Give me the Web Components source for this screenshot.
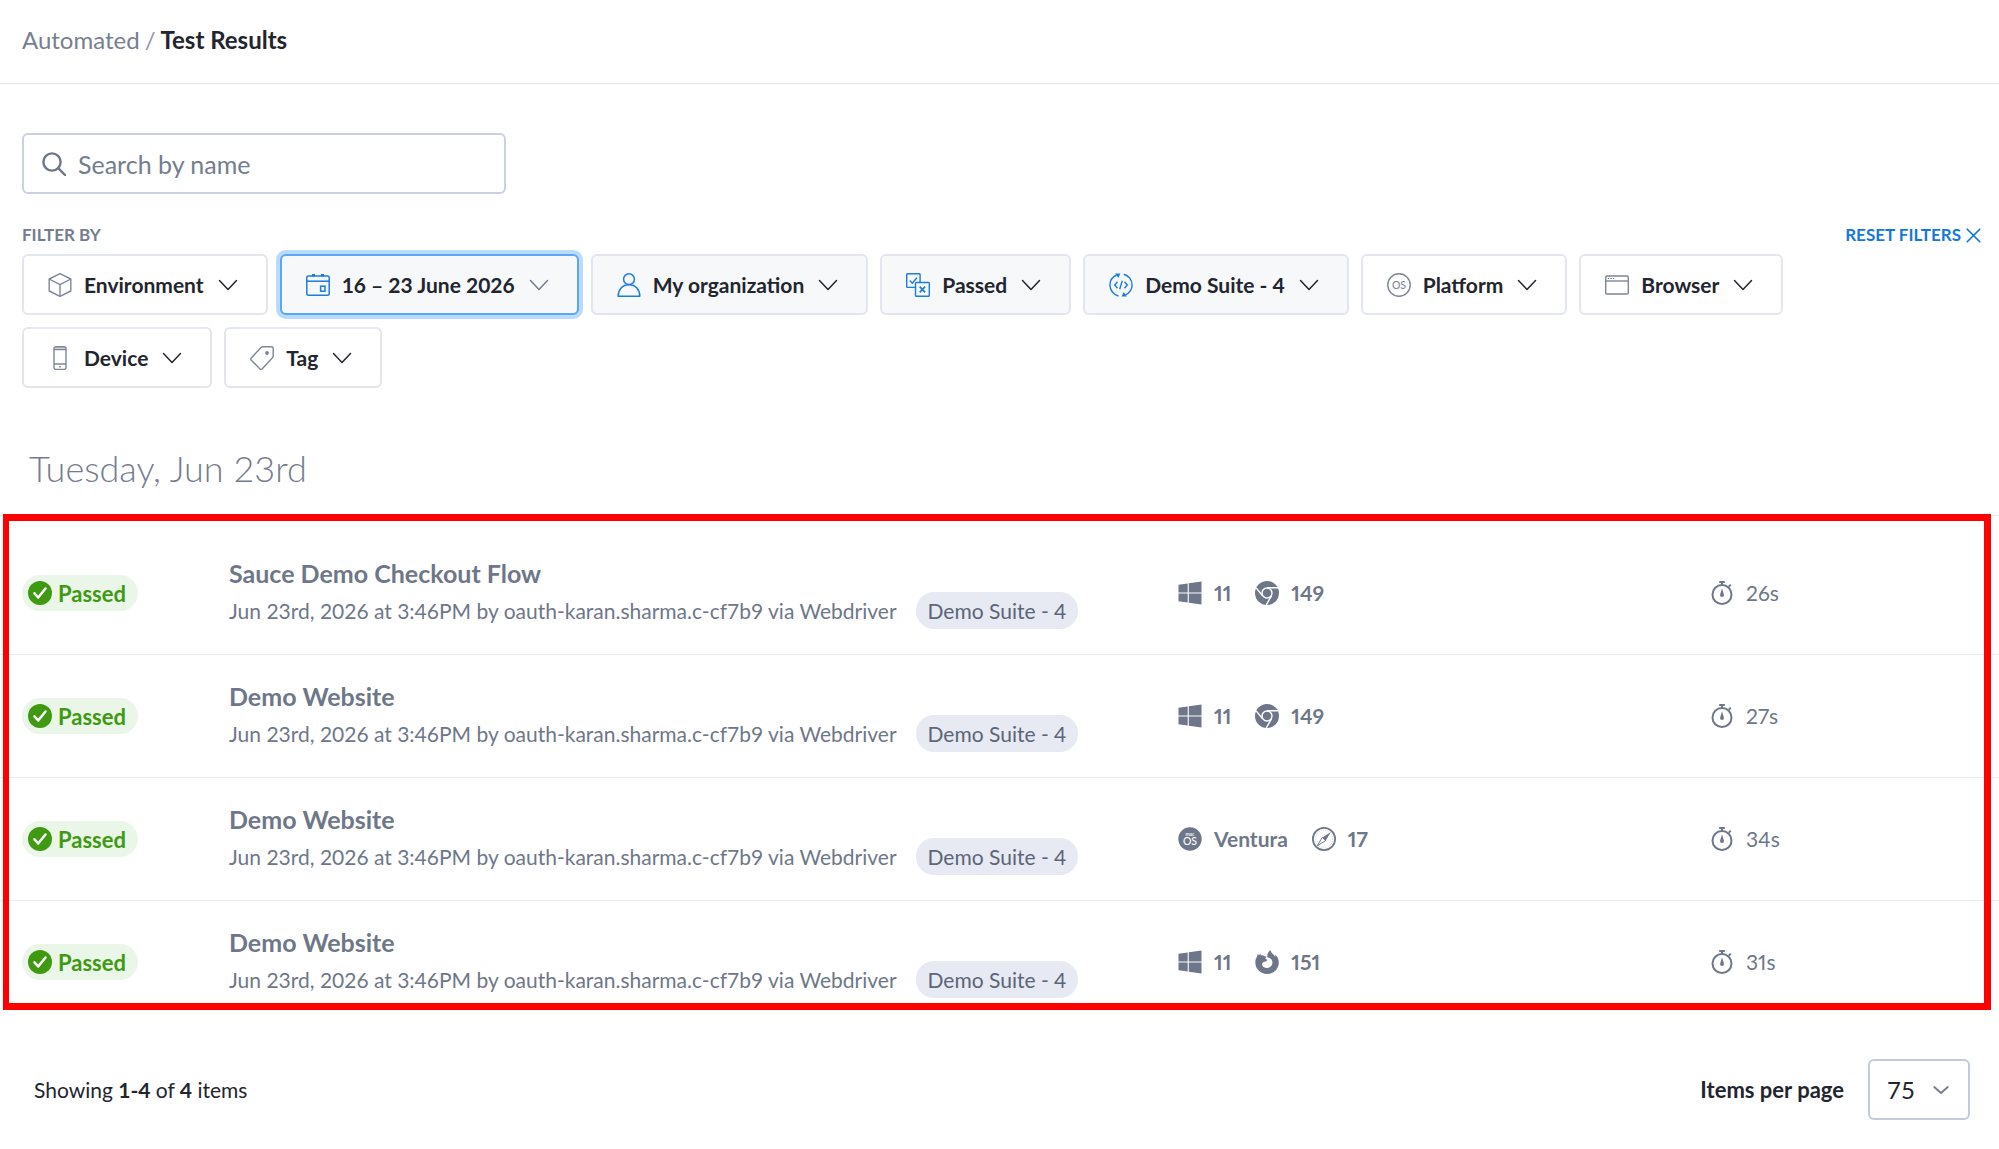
<!DOCTYPE html>
<html lang="en">
<head>
<meta charset="utf-8">
<title>Test Results</title>
<style>
    body {
        margin: 0;
        background: #fff;
        color: #22252e;
        font-family: Lato, "Open Sans", sans-serif;
        font-size: 21px;
    }
</style>
</head>
<body>

<results-page>
    <page-header slot="header" parent="Automated" current="Test Results"></page-header>
    <search-box slot="search" placeholder="Search by name"></search-box>
    <filter-bar slot="filters">
        <filter-button icon="cube">Environment</filter-button>
        <filter-button icon="calendar" selected focused>16 – 23 June 2026</filter-button>
        <filter-button icon="person" selected>My organization</filter-button>
        <filter-button icon="status" selected>Passed</filter-button>
        <filter-button icon="build" selected>Demo Suite - 4</filter-button>
        <filter-button icon="os">Platform</filter-button>
        <filter-button icon="window">Browser</filter-button>
        <filter-button icon="phone">Device</filter-button>
        <filter-button icon="tag">Tag</filter-button>
    </filter-bar>
    <results-table heading="Tuesday, Jun 23rd"></results-table>
    <page-footer slot="footer" range="1-4" total="4"></page-footer>
</results-page>

<script>
const icons = {
    search: '<g fill="none" stroke="currentColor" stroke-width="2.4" stroke-linecap="round"><circle cx="10" cy="10" r="8.6"/><path d="M16.2 16.2 23 23"/></g>',
    cube: '<g fill="none" stroke="currentColor" stroke-width="1.4" stroke-linejoin="round"><path d="M12 .7 22.8 6v12L12 23.4 1.2 18V6z"/><path d="M1.2 6 12 11.6 22.8 6M12 11.6v11.8"/></g>',
    calendar: '<g fill="none" stroke="currentColor" stroke-width="1.5"><rect x=".8" y="3" width="22.4" height="19.2" rx="1.5"/><path d="M.8 8.2h22.4"/><rect x="14.6" y="13.2" width="4.4" height="5"/><path d="M7.5 1v2.5M16.5 1v2.5" stroke-width="3"/></g>',
    person: '<g fill="none" stroke="currentColor" stroke-width="1.5" stroke-linejoin="round"><circle cx="12" cy="6.2" r="5.4"/><path d="M1.2 23.2c0-6.6 4.2-11.4 10.8-11.4s10.8 4.8 10.8 11.4z"/></g>',
    status: '<g fill="none" stroke="currentColor" stroke-width="1.4" stroke-linejoin="round"><path d="M9.4 14.4H1.5a.8.8 0 0 1-.8-.8V1.5a.8.8 0 0 1 .8-.8h11.8a.8.8 0 0 1 .8.8v8"/><rect x="9.5" y="9.5" width="13.8" height="13.8" rx=".8"/><path d="m3.8 7.6 2.5 2.7 4.5-5.5"/><path d="m13.7 13.7 5.4 5.6m0-5.6-5.4 5.6" stroke-width="1.7"/></g>',
    build: '<g fill="none" stroke="currentColor" stroke-width="1.4"><path d="M9.5 23C4.5 21.6.9 17.3.9 12c0-4.5 2.5-8 6.7-10"/><path d="M14.8 1.2C19.6 2.5 23.1 6.8 23.1 12c0 4.4-2.5 7.9-6.6 9.8"/><path d="m8.5 8.8-2.8 3.2 2.8 3.2M15.5 8.8l2.8 3.2-2.8 3.2M13.3 7.8l-2.6 8.4"/></g><path d="M6.2.6h5.2L9.3 5zM17.8 23.4h-5.2L14.7 19z" fill="currentColor"/>',
    os: '<circle cx="12" cy="12" r="11.2" fill="none" stroke="currentColor" stroke-width="1.4"/><text x="12" y="15.8" text-anchor="middle" font-size="10.5" font-weight="500" fill="currentColor">OS</text>',
    window: '<g fill="none" stroke="currentColor" stroke-width="1.4"><rect x=".7" y="3" width="22.6" height="18" rx="1.2"/><path d="M.7 8h22.6"/></g><path d="M2.8 5.5h1.5M5.3 5.5h1.5M7.8 5.5h1.5" stroke="currentColor" stroke-width="1.2"/>',
    phone: '<g fill="none" stroke="currentColor" stroke-width="1.4"><rect x="6" y=".7" width="12" height="22.8" rx="2"/><path d="M6 3.6h12M6 18h12"/></g><path d="M6.500 1h11v2.500h-11z" fill="currentColor" opacity=".4"/><circle cx="12" cy="20.7" r=".9" fill="currentColor"/>',
    tag: '<path d="M12.9.8h8.6c1 0 1.7.7 1.7 1.7v7.3c0 .8-.2 1.4-.7 2L11.6 23.4h-1.2L.9 13.7v-1.3L11 1.5c.5-.5 1.1-.7 1.9-.7z" fill="none" stroke="currentColor" stroke-width="1.4" stroke-linejoin="round"/><circle cx="17" cy="7" r="1.9" fill="currentColor"/>',
    chevron: '<path d="m3.5 7.500 8.500 9 8.500-9" fill="none" stroke="currentColor" stroke-width="1.5" stroke-linecap="round" stroke-linejoin="round"/>',
    caret: '<path d="m3 8 9 8 9-8" fill="none" stroke="currentColor" stroke-width="2.5" stroke-linecap="round" stroke-linejoin="round"/>',
    close: '<path d="m2 2 20 20M22 2 2 22" fill="none" stroke="currentColor" stroke-width="2.8" stroke-linecap="round"/>',
    check: '<circle cx="12" cy="12" r="12" fill="currentColor"/><path d="m6.5 12.3 3.7 4.2 7.3-9" fill="none" stroke="#fff" stroke-width="2.5" stroke-linecap="round" stroke-linejoin="round"/>',
    windows: '<path d="M.5 3.7 9.7 2.4v9H.5zM10.8 2.2 23.5.5v10.9H10.8zM.5 12.6h9.2v9L.5 20.3zM10.8 12.6h12.7v11L10.8 21.8z" fill="currentColor"/>',
    chrome: '<circle cx="12" cy="12" r="12" fill="currentColor"/><g fill="none" stroke="#fff" stroke-width="1.4"><circle cx="12" cy="12" r="5"/><path d="M12 6.8h11.3M7.6 14.7 1.1 6.9M16.6 14.6 11.2 24"/></g>',
    macos: '<circle cx="12" cy="12" r="11.7" fill="currentColor"/><g fill="#fff" text-anchor="middle"><text x="12" y="8.8" font-size="5" font-weight="600">mac</text><text x="12" y="18" font-size="10.5" font-weight="500">OS</text></g>',
    safari: '<circle cx="12" cy="12" r="11.1" fill="none" stroke="currentColor" stroke-width="1.8"/><circle cx="12" cy="12" r="8.6" fill="none" stroke="currentColor" stroke-width=".8" stroke-dasharray=".6 1.6" opacity=".6"/><path d="m19 5-5.4 8.7-3.3-3.3z" fill="currentColor"/><path d="m5.2 18.8 5.1-8.4 3.3 3.3z" fill="none" stroke="currentColor" stroke-width="1"/>',
    firefox: '<path d="M15.6 0c.3 2 1 3 2.6 4.3 1 .9 1.5 1.7 1.9 2.6.3-.8.3-1.5.2-2.3 2.3 2.2 3.5 5 3.5 7.9 0 6.4-5.2 11.5-11.7 11.5C5.500 24 .3 19 .3 12.6c0-2.500.6-4.400 1.700-6.200L2.600 4l1.300 1.300L5.500 3.600l.3 1.800c1.500-.3 2.900 0 4 .8.8 0 1.500.2 2 .6-1.200 1-1.500 1.300-1.100 2.300l1.700.6c-.4 1.300-1.400 1.700-2.800 2-1.700.4-2.700 1.300-2.600 2.700.3 2 2.500 3.500 5 3.500 3.200 0 5.400-2.400 5.400-5.200 0-2-.9-3.600-2.500-4.700l-2.600-.7c-.3-3 .7-5.600 3.300-7.300z" fill="currentColor"/>',
    timer: '<g fill="none" stroke="currentColor" stroke-width="2"><circle cx="12" cy="13.5" r="9.5"/><path d="M9.2 1h5.6M12 1v3M18.8 5.600l2-2"/></g><path d="M12 7.2 14 14a2 2 0 1 1-4 0z" fill="currentColor"/>'
};

const tests = [
    { name: 'Sauce Demo Checkout Flow', os: 'windows', osVersion: '11', browser: 'chrome', browserVersion: '149', time: '26s' },
    { name: 'Demo Website', os: 'windows', osVersion: '11', browser: 'chrome', browserVersion: '149', time: '27s' },
    { name: 'Demo Website', os: 'macos', osVersion: 'Ventura', browser: 'safari', browserVersion: '17', time: '34s' },
    { name: 'Demo Website', os: 'windows', osVersion: '11', browser: 'firefox', browserVersion: '151', time: '31s' }
];

class UiIcon extends HTMLElement {

    constructor() {
        super();
        this.shadow = this.attachShadow({ mode: 'open' });
    }

    connectedCallback() {
        this.shadow.innerHTML =
        `
        <style>
        :host {
            display: inline-flex;
            flex: none;
            width: 24px;
            height: 24px;
        }
        svg {
            width: 100%;
            height: 100%;
        }
        </style>
        <svg viewBox="0 0 24 24" aria-hidden="true">${icons[this.getAttribute('name')]}</svg>
        `;
    }
}

class ResultsPage extends HTMLElement {

    constructor() {
        super();
        this.shadow = this.attachShadow({ mode: 'open' });
    }

    connectedCallback() {
        this.shadow.innerHTML =
        `
        <style>
        :host {
            display: block;
        }
        .controls {
            padding: 49px 22px 0;
        }
        .filters {
            margin-top: 30px;
        }
        </style>
        <slot name="header"></slot>
        <main>
            <div class="controls">
                <slot name="search"></slot>
                <div class="filters"><slot name="filters"></slot></div>
            </div>
            <slot></slot>
        </main>
        <slot name="footer"></slot>
        `;
    }
}

class PageHeader extends HTMLElement {

    constructor() {
        super();
        this.shadow = this.attachShadow({ mode: 'open' });
    }

    connectedCallback() {
        this.shadow.innerHTML =
        `
        <style>
        :host {
            display: block;
            border-bottom: 1px solid #e3e6ee;
        }
        nav {
            display: flex;
            gap: 5px;
            padding: 25px 22px 28px;
            font-size: 24px;
            line-height: 30px;
            color: #9298a5;
        }
        a {
            color: #777f90;
            text-decoration: none;
        }
        h1 {
            margin: 0;
            font-size: 24px;
            font-weight: 700;
            color: #22252e;
        }
        </style>
        <nav aria-label="Breadcrumb">
            <a href="#automated">${this.getAttribute('parent')}</a>
            <span>/</span>
            <h1>${this.getAttribute('current')}</h1>
        </nav>
        `;
    }
}

class SearchBox extends HTMLElement {

    constructor() {
        super();
        this.shadow = this.attachShadow({ mode: 'open' });
    }

    connectedCallback() {
        const placeholder = this.getAttribute('placeholder');

        this.shadow.innerHTML =
        `
        <style>
        :host {
            display: block;
            max-width: 484px;
        }
        label {
            display: flex;
            align-items: center;
            gap: 12px;
            box-sizing: border-box;
            height: 61px;
            padding: 0 18px;
            border: 2px solid #cbd0df;
            border-radius: 6px;
            color: #6e7789;
        }
        input {
            flex: 1;
            min-width: 0;
            padding: 0;
            border: 0;
            outline: 0;
            font: inherit;
            font-size: 25px;
            color: #22252e;
        }
        input::placeholder {
            color: #747c8e;
            opacity: 1;
        }
        </style>
        <label>
            <ui-icon name="search"></ui-icon>
            <input type="text" placeholder="${placeholder}" aria-label="${placeholder}">
        </label>
        `;
    }
}

class FilterBar extends HTMLElement {

    constructor() {
        super();
        this.shadow = this.attachShadow({ mode: 'open' });
    }

    connectedCallback() {
        this.shadow.innerHTML =
        `
        <style>
        :host {
            display: block;
        }
        .top {
            display: flex;
            justify-content: space-between;
            font-size: 17px;
            font-weight: 700;
            line-height: 22px;
            color: #747c8e;
        }
        .reset {
            display: flex;
            align-items: center;
            gap: 5px;
            margin-right: -4px;
            padding: 0;
            border: 0;
            background: none;
            font: inherit;
            color: #1677e0;
        }
        .reset ui-icon {
            width: 15px;
            height: 15px;
        }
        .list {
            display: flex;
            flex-wrap: wrap;
            gap: 12px;
            max-width: 1800px;
            margin-top: 8px;
        }
        </style>
        <div class="top">
            <span>FILTER BY</span>
            <button class="reset" type="button">RESET FILTERS<ui-icon name="close"></ui-icon></button>
        </div>
        <div class="list"><slot></slot></div>
        `;
    }
}

class FilterButton extends HTMLElement {

    constructor() {
        super();
        this.shadow = this.attachShadow({ mode: 'open' });
    }

    connectedCallback() {
        this.shadow.innerHTML =
        `
        <style>
        :host {
            display: block;
            --icon: #7e8697;
        }
        :host([selected]) {
            --icon: #1c7ce0;
        }
        button {
            display: flex;
            align-items: center;
            gap: 12px;
            height: 61px;
            padding: 0 26px 0 24px;
            border: 2px solid #e3e6ef;
            border-radius: 6px;
            background: #fff;
            font: inherit;
            font-weight: 700;
            color: #22252e;
            white-space: nowrap;
        }
        :host([selected]) button {
            background: #f6f8fa;
        }
        :host([focused]) button {
            border-color: #5aa6f8;
            box-shadow: 0 0 0 4px #badbfc;
        }
        .icon {
            color: var(--icon);
        }
        :host([focused]) .chevron {
            color: #747c8e;
        }
        </style>
        <button type="button" aria-haspopup="true">
            <ui-icon class="icon" name="${this.getAttribute('icon')}"></ui-icon>
            <slot></slot>
            <ui-icon class="chevron" name="chevron"></ui-icon>
        </button>
        `;
    }
}

class StatusPill extends HTMLElement {

    constructor() {
        super();
        this.shadow = this.attachShadow({ mode: 'open' });
    }

    connectedCallback() {
        this.shadow.innerHTML =
        `
        <style>
        :host {
            display: flex;
            align-items: center;
            gap: 6px;
            width: fit-content;
            height: 36px;
            padding: 0 12px 0 6px;
            border-radius: 18px;
            background: #eaf6e7;
            font-size: 22px;
            font-weight: 700;
            color: #3f9a12;
        }
        </style>
        <ui-icon name="check"></ui-icon>
        <slot></slot>
        `;
    }
}

class IconLabel extends HTMLElement {

    constructor() {
        super();
        this.shadow = this.attachShadow({ mode: 'open' });
    }

    connectedCallback() {
        this.shadow.innerHTML =
        `
        <style>
        :host {
            display: flex;
            align-items: center;
            gap: 12px;
            line-height: 24px;
            font-variant-numeric: proportional-nums;
        }
        </style>
        <ui-icon name="${this.getAttribute('icon')}"></ui-icon>
        <slot></slot>
        `;
    }
}

class ResultsTable extends HTMLElement {

    constructor() {
        super();
        this.shadow = this.attachShadow({ mode: 'open' });
    }

    row(test) {
        return `
        <tr>
            <td><status-pill>Passed</status-pill></td>
            <td>
                <a href="#test">${test.name}</a>
                <div class="details">
                    <span>Jun 23rd, 2026 at 3:46PM by oauth-karan.sharma.c-cf7b9 via Webdriver</span>
                    <span class="chip">Demo Suite - 4</span>
                </div>
            </td>
            <td>
                <div class="platform">
                    <icon-label icon="${test.os}">${test.osVersion}</icon-label>
                    <icon-label icon="${test.browser}">${test.browserVersion}</icon-label>
                </div>
            </td>
            <td><icon-label icon="timer">${test.time}</icon-label></td>
        </tr>
        `;
    }

    connectedCallback() {
        this.shadow.innerHTML =
        `
        <style>
        :host {
            display: block;
        }
        h2 {
            margin: 56px 29px 23px;
            font-size: 36px;
            font-weight: 300;
            line-height: 48px;
            color: #747c8e;
        }
        .wrap {
            position: relative;
            padding-top: 16px;
            border-top: 1px solid #ececf0;
        }
        .highlight {
            position: absolute;
            inset: -2px 8px 14px 3px;
            border: 7px solid #ff0000;
            border-width: 7px 7px 7px 6px;
            pointer-events: none;
        }
        table {
            width: 100%;
            table-layout: fixed;
            border-collapse: separate;
            border-spacing: 0;
            color: #6e7789;
        }
        col.status {
            width: 229px;
        }
        col.platforms {
            width: 532px;
        }
        col.duration {
            width: 289px;
        }
        td {
            box-sizing: border-box;
            height: 123px;
            padding: 0;
            border-bottom: 1px solid #ececf0;
        }
        td:first-child {
            padding-left: 22px;
        }
        tr:last-child td {
            border-bottom-color: transparent;
        }
        a {
            display: block;
            margin-bottom: 4px;
            font-size: 25px;
            font-weight: 700;
            line-height: 30px;
            color: inherit;
            text-decoration: none;
        }
        .details {
            display: flex;
            align-items: center;
            gap: 19px;
            white-space: nowrap;
        }
        .chip {
            padding: 0 12px;
            border-radius: 18px;
            background: #e7eaf2;
            line-height: 37px;
            color: #5c6579;
        }
        .platform {
            display: flex;
            gap: 24px;
            font-weight: 700;
        }
        </style>
        <h2>${this.getAttribute('heading')}</h2>
        <div class="wrap">
            <table>
                <colgroup>
                    <col class="status"><col><col class="platforms"><col class="duration">
                </colgroup>
                <tbody>${tests.map(test => this.row(test)).join('')}</tbody>
            </table>
            <div class="highlight"></div>
        </div>
        `;
    }
}

class PageFooter extends HTMLElement {

    constructor() {
        super();
        this.shadow = this.attachShadow({ mode: 'open' });
    }

    connectedCallback() {
        this.shadow.innerHTML =
        `
        <style>
        :host {
            display: flex;
            align-items: center;
            justify-content: space-between;
            padding: 35px 29px 27px 34px;
        }
        .size {
            display: flex;
            align-items: center;
            gap: 24px;
        }
        label {
            font-size: 22px;
            font-weight: 700;
        }
        .select {
            display: grid;
            align-items: center;
        }
        .select > * {
            grid-area: 1 / 1;
        }
        .select ui-icon {
            justify-self: end;
            width: 18px;
            height: 18px;
            margin-right: 20px;
            color: #747c8e;
            pointer-events: none;
        }
        select {
            appearance: none;
            box-sizing: border-box;
            width: 102px;
            height: 61px;
            padding: 0 17px;
            border: 2px solid #c5cadb;
            border-radius: 6px;
            background: #fff;
            font: inherit;
            font-size: 24px;
            color: #22252e;
        }
        </style>
        <div>Showing <b>${this.getAttribute('range')}</b> of <b>${this.getAttribute('total')}</b> items</div>
        <div class="size">
            <label for="page-size">Items per page</label>
            <div class="select">
                <select id="page-size">
                    <option>25</option>
                    <option>50</option>
                    <option selected>75</option>
                    <option>100</option>
                </select>
                <ui-icon name="caret"></ui-icon>
            </div>
        </div>
        `;
    }
}

customElements.define('ui-icon', UiIcon);
customElements.define('results-page', ResultsPage);
customElements.define('page-header', PageHeader);
customElements.define('search-box', SearchBox);
customElements.define('filter-bar', FilterBar);
customElements.define('filter-button', FilterButton);
customElements.define('status-pill', StatusPill);
customElements.define('icon-label', IconLabel);
customElements.define('results-table', ResultsTable);
customElements.define('page-footer', PageFooter);
</script>
</body>
</html>
